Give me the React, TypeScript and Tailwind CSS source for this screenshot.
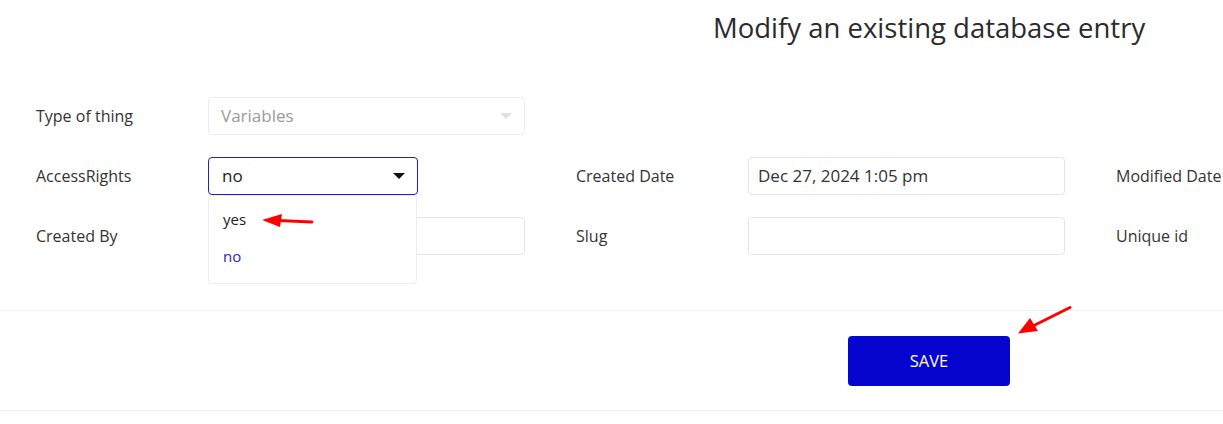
import React from "react";

const font = { fontFamily: '"Open Sans", "Noto Sans", sans-serif' };

function Label({ children }: { children: React.ReactNode }) {
  return <div className="w-[172px] shrink-0 flex items-center text-[16px] text-[#333333] whitespace-nowrap">{children}</div>;
}

function TextBox({ value }: { value?: string }) {
  return (
    <div className="w-[317px] shrink-0 h-[38px] rounded-[4px] border border-[#e6e6e6] bg-white flex items-center px-[9px] text-[17px] text-[#333333]">
      {value}
    </div>
  );
}

function Pair({ children }: { children: React.ReactNode }) {
  return <div className="w-[489px] shrink-0 flex">{children}</div>;
}

export default function App() {
  return (
    <div className="relative w-[1223px] h-[424px] overflow-hidden bg-white" style={font}>
      <div className="pl-[713px] pt-[8px] h-[48px]">
        <h1 className="text-[27.5px] leading-[40px] text-[#2b2b2b] whitespace-nowrap">Modify an existing database entry</h1>
      </div>

      <div className="mt-[49px] pl-[36px] flex flex-col gap-y-[22px]">
        {/* Row 1 */}
        <div className="flex gap-x-[51px] h-[38px]">
          <Pair>
            <Label>Type of thing</Label>
            <div className="w-[317px] shrink-0 h-[38px] rounded-[4px] border border-[#ececec] bg-white flex items-center justify-between pl-[12px] pr-[12px] text-[17px] text-[#9a9a9a]">
              <span>Variables</span>
              <svg width="12" height="7" viewBox="0 0 12 7"><path d="M0 0 L12 0 L6 6 Z" fill="#dde1e6" /></svg>
            </div>
          </Pair>
        </div>

        {/* Row 2 */}
        <div className="flex gap-x-[51px] h-[38px]">
          <Pair>
            <Label>AccessRights</Label>
            <div className="relative">
              <div className="w-[210px] h-[38px] rounded-[4px] border border-[#1f1fc4] bg-white flex items-center justify-between pl-[13px] pr-[12px] text-[17px] text-[#222222]">
                <span>no</span>
                <svg width="12" height="7" viewBox="0 0 12 7"><path d="M0 0 L12 0 L6 6 Z" fill="#111111" /></svg>
              </div>
              <div className="absolute left-0 top-[38px] z-10 w-[209px] h-[89px] rounded-[4px] border border-[#ededed] bg-white text-[15px]">
                <div className="absolute left-[14px] top-[13px] leading-[20px] text-[#222222]">yes</div>
                <div className="absolute left-[14px] top-[50px] leading-[20px] text-[#2424dc]">no</div>
              </div>
            </div>
          </Pair>
          <Pair>
            <Label>Created Date</Label>
            <TextBox value="Dec 27, 2024 1:05 pm" />
          </Pair>
          <Pair>
            <Label>Modified Date</Label>
            <TextBox />
          </Pair>
        </div>

        {/* Row 3 */}
        <div className="flex gap-x-[51px] h-[38px]">
          <Pair>
            <Label>Created By</Label>
            <TextBox />
          </Pair>
          <Pair>
            <Label>Slug</Label>
            <TextBox />
          </Pair>
          <Pair>
            <Label>Unique id</Label>
            <TextBox />
          </Pair>
        </div>
      </div>

      <div className="mt-[55px] border-t border-[#efefef]" />
      <div className="pl-[848px] pt-[25px] h-[99px]">
        <button className="w-[162px] h-[50px] rounded-[4px] bg-[#0505cf] text-white text-[16.5px] font-normal">SAVE</button>
      </div>
      <div className="border-t border-[#efefef]" />

      <svg className="absolute inset-0 z-20 pointer-events-none" width="1223" height="424">
        <path d="M312 222 L278 220.5" stroke="#ff0000" strokeWidth="3" strokeLinecap="round" fill="none" />
        <path d="M262 220 L282 214 L280 227 Z" fill="#ff0000" />
        <path d="M1070 307.5 L1034 325.5" stroke="#ff0000" strokeWidth="3" strokeLinecap="round" fill="none" />
        <path d="M1018 333.5 L1030 318 L1038 331 Z" fill="#ff0000" />
      </svg>
    </div>
  );
}
